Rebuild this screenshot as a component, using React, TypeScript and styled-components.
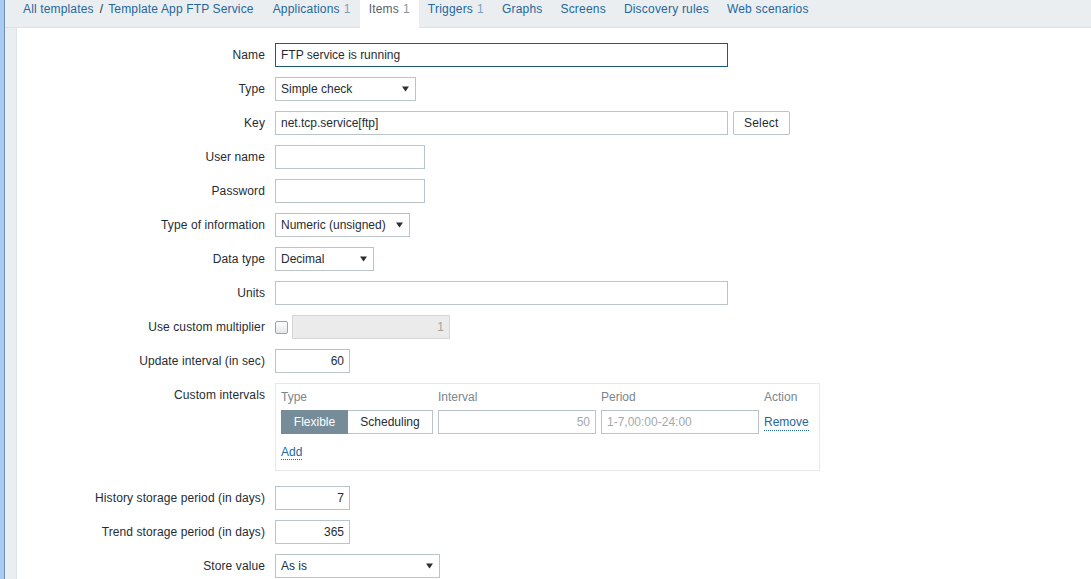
import React from 'react'
import styled, { createGlobalStyle } from 'styled-components'

const GlobalStyle = createGlobalStyle`
  html, body {
    margin: 0;
    padding: 0;
    background: #ebeef0;
    font-family: Arial, "Liberation Sans", sans-serif;
    font-size: 12px;
    color: #1f2c33;
  }
  * {
    box-sizing: border-box;
  }
`

const Screen = styled.div`
  display: flex;
  width: 1091px;
  height: 579px;
  overflow: hidden;
`

const WindowEdge = styled.div`
  width: 5px;
  flex: none;
  background: #aacbf0;
  border-right: 1px solid #6f93bd;
`

const Page = styled.div`
  flex: 1;
  display: flex;
  flex-direction: column;
  background: #ebeef0;
`

const TabBar = styled.div`
  display: flex;
  align-items: stretch;
  height: 28px;
  padding-left: 18px;
  border-bottom: 1px solid #dde2e5;
  letter-spacing: 0.2px;
`

const Crumb = styled.span`
  display: flex;
  align-items: center;
  height: 27px;
  color: #24679e;
  padding-bottom: 10px;
  letter-spacing: 0.15px;
`

const Slash = styled.span`
  display: flex;
  align-items: center;
  height: 27px;
  padding: 0 5px 10px 6px;
  color: #1f2c33;
`

const Tab = styled.span<{ $active?: boolean }>`
  display: flex;
  align-items: center;
  height: 28px;
  padding: 0 9px 10px;
  color: ${({ $active }) => ($active ? '#54636b' : '#24679e')};
  background: ${({ $active }) => ($active ? '#ffffff' : 'transparent')};
`

const Count = styled.span<{ $active?: boolean }>`
  margin-left: 4px;
  color: ${({ $active }) => ($active ? '#8a979e' : '#7c9fbd')};
`

const TabSpacer = styled.span`
  width: 10px;
`

const Panel = styled.div`
  flex: 1;
  margin-left: 11px;
  background: #ffffff;
  border-left: 1px solid #dde2e5;
  padding-top: 15px;
`

const Form = styled.div`
  display: grid;
  grid-template-columns: 248px 1fr;
  column-gap: 10px;
  row-gap: 10px;
  align-items: start;
`

const Label = styled.div`
  text-align: right;
  line-height: 24px;
  color: #1f2c33;
  white-space: nowrap;
  letter-spacing: 0.1px;
`

const Field = styled.div`
  display: flex;
  align-items: center;
  gap: 5px;
`

const TextBox = styled.input<{ $w: number; $right?: boolean; $focused?: boolean }>`
  width: ${({ $w }) => $w}px;
  height: 24px;
  padding: 0 5px;
  margin: 0;
  border: 1px solid ${({ $focused }) => ($focused ? '#1f5b75' : '#b9c3c8')};
  border-radius: 0;
  background: #ffffff;
  font-family: Arial, "Liberation Sans", sans-serif;
  font-size: 12px;
  color: #1f2c33;
  text-align: ${({ $right }) => ($right ? 'right' : 'left')};
  outline: none;

  &:disabled {
    background: #ebebeb;
    border-color: #d3d6d8;
    color: #a0a0a0;
  }
`

const SelectBox = styled.div<{ $w: number }>`
  display: flex;
  align-items: center;
  justify-content: space-between;
  width: ${({ $w }) => $w}px;
  height: 24px;
  padding: 0 6px 0 5px;
  border: 1px solid #b9c3c8;
  background: #ffffff;
  color: #1f2c33;
`

const Button = styled.button`
  height: 24px;
  padding: 0 10px;
  border: 1px solid #b9c3c8;
  border-radius: 2px;
  background: #ffffff;
  font-family: Arial, "Liberation Sans", sans-serif;
  font-size: 12px;
  letter-spacing: 0.2px;
  color: #1f2c33;
`

const Check = styled.span`
  display: inline-block;
  width: 13px;
  height: 13px;
  margin-right: -1px;
  border: 1px solid #9aa4aa;
  border-radius: 2px;
  background: linear-gradient(#fdfdfd, #e4e7e9);
`

const IntervalsBox = styled.div`
  width: 545px;
  padding: 5px 5px 10px;
  border: 1px solid #e6e9eb;
  margin-bottom: 5px;
`

const IntervalsGrid = styled.div`
  display: grid;
  grid-template-columns: 152px 158px 158px auto;
  column-gap: 5px;
  row-gap: 5px;
  align-items: center;
`

const HeadCell = styled.div`
  line-height: 16px;
  color: #7a868d;
`

const Segmented = styled.div`
  display: flex;
  height: 24px;
`

const Segment = styled.span<{ $on?: boolean }>`
  display: flex;
  align-items: center;
  justify-content: center;
  width: ${({ $on }) => ($on ? 67 : 85)}px;
  border: 1px solid ${({ $on }) => ($on ? '#768d99' : '#b9c3c8')};
  border-left-width: ${({ $on }) => ($on ? 1 : 0)}px;
  background: ${({ $on }) => ($on ? '#768d99' : '#ffffff')};
  color: ${({ $on }) => ($on ? '#ffffff' : '#1f2c33')};
`

const PlainBox = styled.div<{ $right?: boolean }>`
  display: flex;
  align-items: center;
  justify-content: ${({ $right }) => ($right ? 'flex-end' : 'flex-start')};
  height: 24px;
  padding: 0 5px;
  border: 1px solid #b9c3c8;
  color: #a3a9ad;
`

const DottedLink = styled.span`
  color: #24679e;
  line-height: 16px;
  border-bottom: 1px dotted #24679e;
  justify-self: start;
`

const AddRow = styled.div`
  margin-top: 10px;
  line-height: 16px;
`

const Arrow = () => (
  <svg width="7" height="6" viewBox="0 0 7 6">
    <path d="M0 0.5 L7 0.5 L3.5 5.5 Z" fill="#2a2f33" />
  </svg>
)

const Select: React.FC<{ w: number; value: string }> = ({ w, value }) => (
  <SelectBox $w={w}>
    <span>{value}</span>
    <Arrow />
  </SelectBox>
)

const tabs = [
  { name: 'Applications', count: '1' },
  { name: 'Items', count: '1', active: true },
  { name: 'Triggers', count: '1' },
  { name: 'Graphs' },
  { name: 'Screens' },
  { name: 'Discovery rules' },
  { name: 'Web scenarios' },
]

export default function App() {
  return (
    <>
      <GlobalStyle />
      <Screen>
        <WindowEdge />
        <Page>
          <TabBar>
            <Crumb>All templates</Crumb>
            <Slash>/</Slash>
            <Crumb>Template App FTP Service</Crumb>
            <TabSpacer />
            {tabs.map((t) => (
              <Tab key={t.name} $active={t.active}>
                {t.name}
                {t.count && <Count $active={t.active}>{t.count}</Count>}
              </Tab>
            ))}
          </TabBar>
          <Panel>
            <Form>
              <Label>Name</Label>
              <Field>
                <TextBox $w={453} $focused readOnly value="FTP service is running" />
              </Field>

              <Label>Type</Label>
              <Field>
                <Select w={141} value="Simple check" />
              </Field>

              <Label>Key</Label>
              <Field>
                <TextBox $w={453} readOnly value="net.tcp.service[ftp]" />
                <Button>Select</Button>
              </Field>

              <Label>User name</Label>
              <Field>
                <TextBox $w={150} readOnly value="" />
              </Field>

              <Label>Password</Label>
              <Field>
                <TextBox $w={150} readOnly value="" />
              </Field>

              <Label>Type of information</Label>
              <Field>
                <Select w={135} value="Numeric (unsigned)" />
              </Field>

              <Label>Data type</Label>
              <Field>
                <Select w={99} value="Decimal" />
              </Field>

              <Label>Units</Label>
              <Field>
                <TextBox $w={453} readOnly value="" />
              </Field>

              <Label>Use custom multiplier</Label>
              <Field>
                <Check />
                <TextBox $w={158} $right disabled value="1" />
              </Field>

              <Label>Update interval (in sec)</Label>
              <Field>
                <TextBox $w={75} $right readOnly value="60" />
              </Field>

              <Label>Custom intervals</Label>
              <Field>
                <IntervalsBox>
                  <IntervalsGrid>
                    <HeadCell>Type</HeadCell>
                    <HeadCell>Interval</HeadCell>
                    <HeadCell>Period</HeadCell>
                    <HeadCell>Action</HeadCell>
                    <Segmented>
                      <Segment $on>Flexible</Segment>
                      <Segment>Scheduling</Segment>
                    </Segmented>
                    <PlainBox $right>50</PlainBox>
                    <PlainBox>1-7,00:00-24:00</PlainBox>
                    <DottedLink>Remove</DottedLink>
                  </IntervalsGrid>
                  <AddRow>
                    <DottedLink>Add</DottedLink>
                  </AddRow>
                </IntervalsBox>
              </Field>

              <Label>History storage period (in days)</Label>
              <Field>
                <TextBox $w={75} $right readOnly value="7" />
              </Field>

              <Label>Trend storage period (in days)</Label>
              <Field>
                <TextBox $w={75} $right readOnly value="365" />
              </Field>

              <Label>Store value</Label>
              <Field>
                <Select w={165} value="As is" />
              </Field>
            </Form>
          </Panel>
        </Page>
      </Screen>
    </>
  )
}
